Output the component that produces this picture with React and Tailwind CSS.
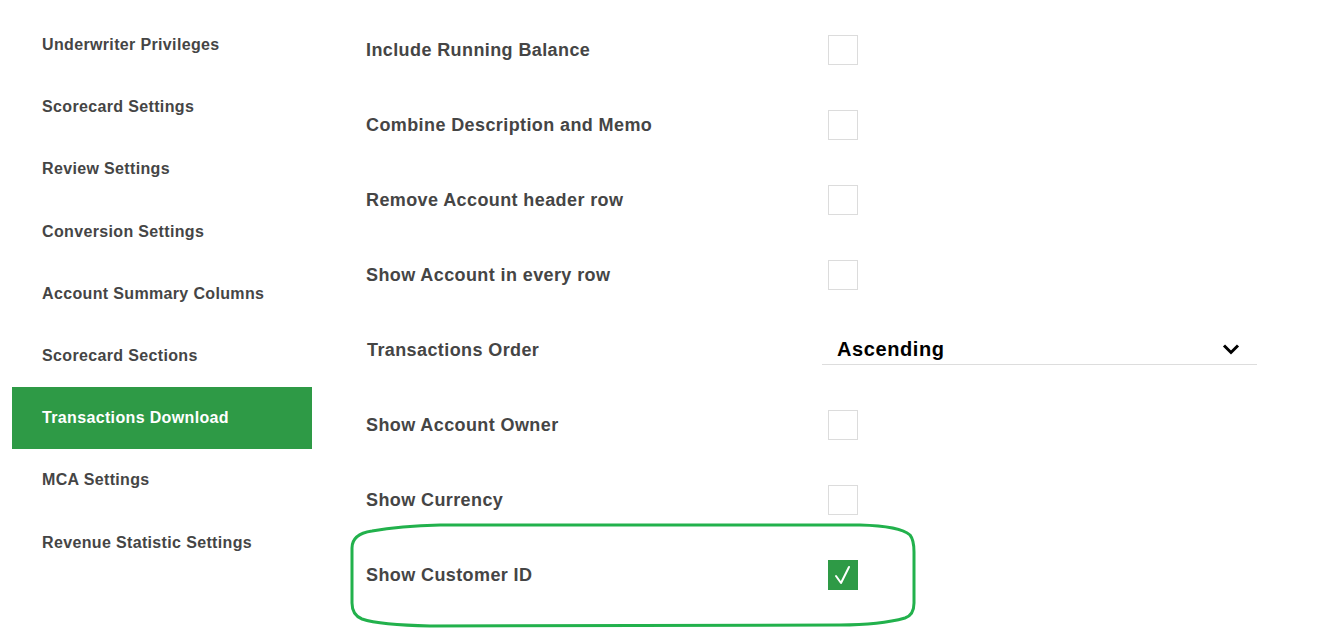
import React from "react";

const side = [
  "Underwriter Privileges",
  "Scorecard Settings",
  "Review Settings",
  "Conversion Settings",
  "Account Summary Columns",
  "Scorecard Sections",
  "Transactions Download",
  "MCA Settings",
  "Revenue Statistic Settings",
];

const rows = [
  { label: "Include Running Balance", type: "cb" },
  { label: "Combine Description and Memo", type: "cb" },
  { label: "Remove Account header row", type: "cb" },
  { label: "Show Account in every row", type: "cb" },
  { label: "Transactions Order", type: "select" },
  { label: "Show Account Owner", type: "cb" },
  { label: "Show Currency", type: "cb" },
  { label: "Show Customer ID", type: "checked" },
];

export default function App() {
  return (
    <div
      className="relative w-[1344px] h-[639px] bg-white overflow-hidden flex"
      style={{ fontFamily: '"Liberation Sans", Arial, sans-serif' }}
    >
      <div className="w-[300px] shrink-0 ml-[12px] pt-[14px] flex flex-col">
        {side.map((s) => {
          const active = s === "Transactions Download";
          return (
            <div
              key={s}
              className={
                "h-[62.2px] flex items-center pl-[30px] text-[16px] font-bold tracking-[0.35px] " +
                (active ? "bg-[#2e9a46] text-white" : "text-[#454545]")
              }
            >
              {s}
            </div>
          );
        })}
      </div>
      <div className="ml-[54px] pt-[12px] flex flex-col">
        {rows.map((r) => (
          <div key={r.label} className="h-[75px] flex items-center">
            <div
              className={
                "w-[456px] mt-[2px] text-[18px] font-bold tracking-[0.4px] text-[#454545] " +
                (r.type === "select" ? "pl-[1px]" : "")
              }
            >
              {r.label}
            </div>
            {r.type === "cb" && (
              <div className="ml-[6px] w-[30px] h-[30px] border border-[#dcdcdc] bg-white" />
            )}
            {r.type === "checked" && (
              <div className="ml-[6px] w-[30px] h-[30px] bg-[#2e9a46] flex items-center justify-center">
                <svg width="20" height="22" viewBox="0 0 20 22">
                  <path
                    d="M3 12 L8 19 L16 3"
                    fill="none"
                    stroke="white"
                    strokeWidth="2"
                    strokeLinecap="round"
                    strokeLinejoin="round"
                  />
                </svg>
              </div>
            )}
            {r.type === "select" && (
              <div className="w-[435px] h-[28px] mt-[3px] border-b border-[#dddddd] flex items-center justify-between pl-[15px] pr-[17px] pb-[3px]">
                <span className="text-[20px] font-bold tracking-[0.6px] text-black">Ascending</span>
                <svg width="18" height="12" viewBox="0 0 18 12">
                  <path
                    d="M2 2.5 L9 9.5 L16 2.5"
                    fill="none"
                    stroke="black"
                    strokeWidth="3"
                  />
                </svg>
              </div>
            )}
          </div>
        ))}
      </div>
      <svg
        className="absolute left-0 top-0 pointer-events-none"
        width="1344"
        height="639"
        viewBox="0 0 1344 639"
      >
        <path
          d="M352 548 Q352 534 372 531 Q400 526 440 525 L860 525 Q900 526 910 535 Q914 540 914 552 L914 603 Q914 615 905 618 Q880 625 840 625 L430 626 Q380 625 362 619 Q352 615 352 603 Z"
          fill="none"
          stroke="#22b14c"
          strokeWidth="3"
        />
      </svg>
    </div>
  );
}
